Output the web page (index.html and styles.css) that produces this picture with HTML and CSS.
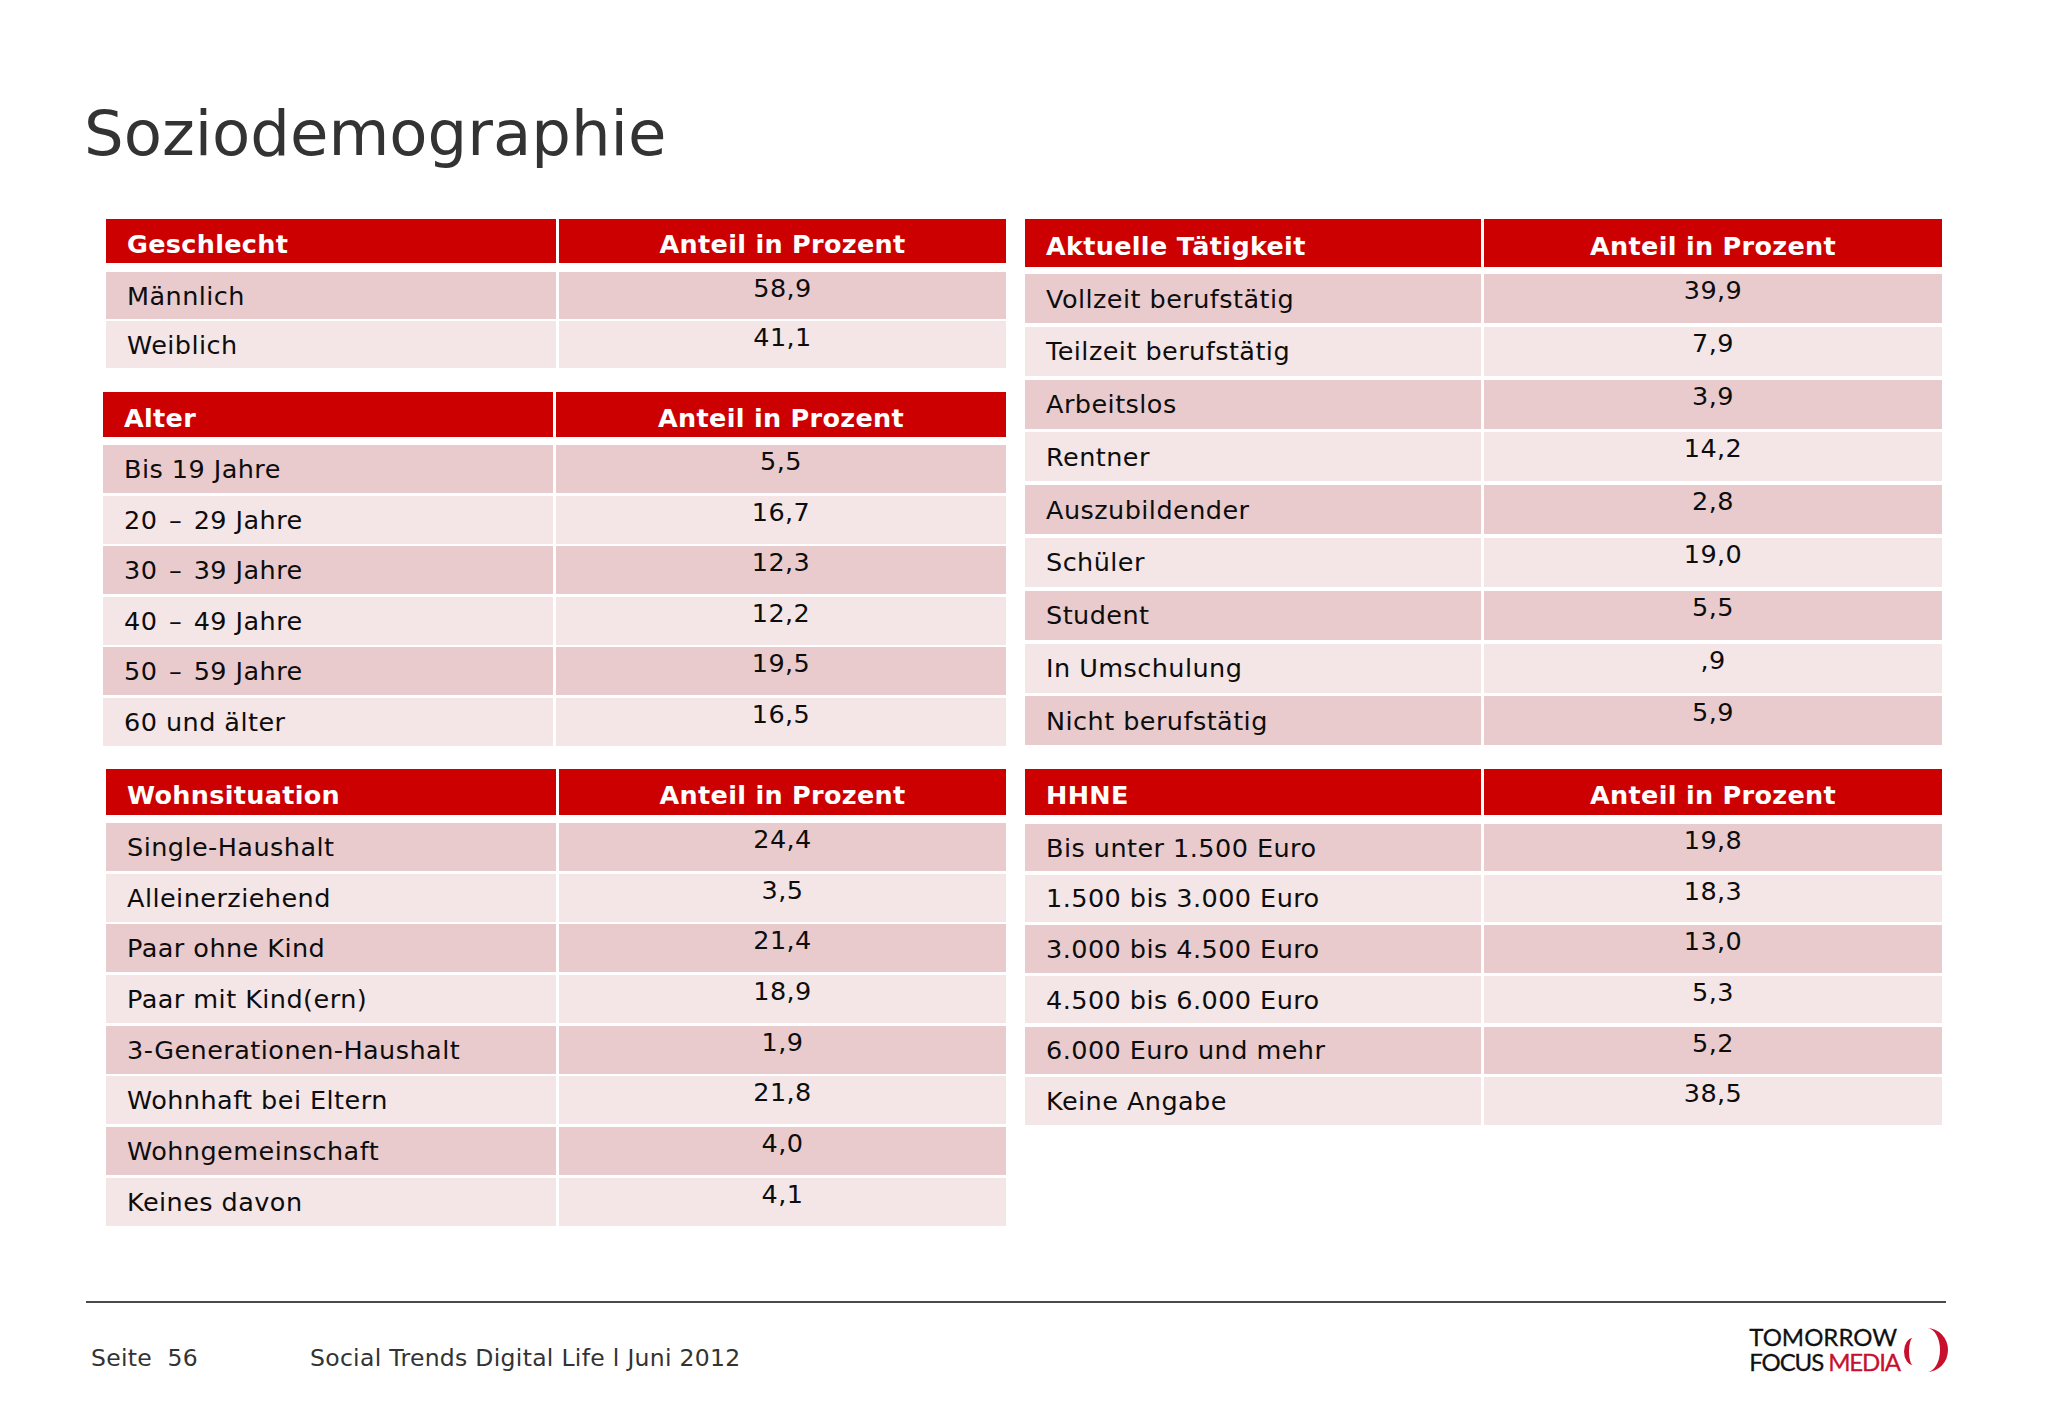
FILE: index.html
```html
<!DOCTYPE html>
<html lang="de">
<head>
<meta charset="utf-8">
<title>Soziodemographie</title>
<link rel="stylesheet" href="styles.css">
</head>
<body>
<div class="slide">
  <h1 class="title">Soziodemographie</h1>

  <div class="tables">
    <div class="col col-left">
      <div class="tbl t-gender">
        <div class="tr th"><div class="c1">Geschlecht</div><div class="c2">Anteil in Prozent</div></div>
        <div class="tr"><div class="c1">Männlich</div><div class="c2">58,9</div></div>
        <div class="tr"><div class="c1">Weiblich</div><div class="c2">41,1</div></div>
      </div>

      <div class="tbl t-age">
        <div class="tr th"><div class="c1">Alter</div><div class="c2">Anteil in Prozent</div></div>
        <div class="tr"><div class="c1">Bis 19 Jahre</div><div class="c2">5,5</div></div>
        <div class="tr"><div class="c1">20 <span class="dash">–</span> 29 Jahre</div><div class="c2">16,7</div></div>
        <div class="tr"><div class="c1">30 <span class="dash">–</span> 39 Jahre</div><div class="c2">12,3</div></div>
        <div class="tr"><div class="c1">40 <span class="dash">–</span> 49 Jahre</div><div class="c2">12,2</div></div>
        <div class="tr"><div class="c1">50 <span class="dash">–</span> 59 Jahre</div><div class="c2">19,5</div></div>
        <div class="tr"><div class="c1">60 und älter</div><div class="c2">16,5</div></div>
      </div>

      <div class="tbl t-home">
        <div class="tr th"><div class="c1">Wohnsituation</div><div class="c2">Anteil in Prozent</div></div>
        <div class="tr"><div class="c1">Single-Haushalt</div><div class="c2">24,4</div></div>
        <div class="tr"><div class="c1">Alleinerziehend</div><div class="c2">3,5</div></div>
        <div class="tr"><div class="c1">Paar ohne Kind</div><div class="c2">21,4</div></div>
        <div class="tr"><div class="c1">Paar mit Kind(ern)</div><div class="c2">18,9</div></div>
        <div class="tr"><div class="c1">3-Generationen-Haushalt</div><div class="c2">1,9</div></div>
        <div class="tr"><div class="c1">Wohnhaft bei Eltern</div><div class="c2">21,8</div></div>
        <div class="tr"><div class="c1">Wohngemeinschaft</div><div class="c2">4,0</div></div>
        <div class="tr"><div class="c1">Keines davon</div><div class="c2">4,1</div></div>
      </div>
    </div>

    <div class="col col-right">
      <div class="tbl t-job">
        <div class="tr th"><div class="c1">Aktuelle Tätigkeit</div><div class="c2">Anteil in Prozent</div></div>
        <div class="tr"><div class="c1">Vollzeit berufstätig</div><div class="c2">39,9</div></div>
        <div class="tr"><div class="c1">Teilzeit berufstätig</div><div class="c2">7,9</div></div>
        <div class="tr"><div class="c1">Arbeitslos</div><div class="c2">3,9</div></div>
        <div class="tr"><div class="c1">Rentner</div><div class="c2">14,2</div></div>
        <div class="tr"><div class="c1">Auszubildender</div><div class="c2">2,8</div></div>
        <div class="tr"><div class="c1">Schüler</div><div class="c2">19,0</div></div>
        <div class="tr"><div class="c1">Student</div><div class="c2">5,5</div></div>
        <div class="tr"><div class="c1">In Umschulung</div><div class="c2">,9</div></div>
        <div class="tr"><div class="c1">Nicht berufstätig</div><div class="c2">5,9</div></div>
      </div>

      <div class="tbl t-income">
        <div class="tr th"><div class="c1">HHNE</div><div class="c2">Anteil in Prozent</div></div>
        <div class="tr"><div class="c1">Bis unter 1.500 Euro</div><div class="c2">19,8</div></div>
        <div class="tr"><div class="c1">1.500 bis 3.000 Euro</div><div class="c2">18,3</div></div>
        <div class="tr"><div class="c1">3.000 bis 4.500 Euro</div><div class="c2">13,0</div></div>
        <div class="tr"><div class="c1">4.500 bis 6.000 Euro</div><div class="c2">5,3</div></div>
        <div class="tr"><div class="c1">6.000 Euro und mehr</div><div class="c2">5,2</div></div>
        <div class="tr"><div class="c1">Keine Angabe</div><div class="c2">38,5</div></div>
      </div>
    </div>
  </div>

  <div class="footer">
    <div class="rule"></div>
    <div class="foot-row">
      <span class="page">Seite&nbsp; 56</span>
      <span class="doc">Social Trends Digital Life l Juni 2012</span>
      <div class="logo">
        <div class="logo-text">
          <div class="logo-l1">TOMORROW</div>
          <div class="logo-l2">FOCUS <span class="red">MEDIA</span></div>
        </div>
        <svg class="logo-mark" width="50" height="46" viewBox="0 0 50 46" aria-hidden="true">
          <path d="M13 11 A9 13.5 0 0 0 13 38 A4 13.5 0 0 1 13 11 Z" fill="#c8102e"/>
          <path d="M27 1 A21 22 0 0 1 27 45 A13 22 0 0 0 27 1 Z" fill="#c8102e"/>
        </svg>
      </div>
    </div>
  </div>
</div>
</body>
</html>
```

FILE: styles.css
```css
html, body {
  margin: 0;
  padding: 0;
  background: #ffffff;
}

body {
  width: 2048px;
  height: 1418px;
  overflow: hidden;
  font-family: "DejaVu Sans", Verdana, sans-serif;
  color: #0d0d0d;
}

.slide {
  box-sizing: border-box;
  width: 2048px;
  height: 1418px;
  padding: 97px 98px 0 84px;
  display: flex;
  flex-direction: column;
}

.title {
  margin: 0;
  font-size: 62.5px;
  line-height: 73px;
  font-weight: normal;
  color: #333333;
}

.tables {
  display: flex;
  align-items: flex-start;
  gap: 19px;
  margin: 49px 0 0 19px;
}

.col {
  display: flex;
  flex-direction: column;
}

.col-left { width: 903px; }
.col-right { width: 917px; }

/* tables */
.tbl {
  --c1: 450px;
  --c2: 447px;
  --hh: 46px;
  --hg: 8px;
  --rh: 48px;
  --rg: 2.7px;
  display: flex;
  flex-direction: column;
}

.t-gender { margin-left: 3px; --hh: 44px; --hg: 9px; --rh: 47px; --rg: 2px; }
.t-age { margin-top: 24px; --c2: 450px; --hh: 45px; --hg: 8px; --rh: 48px; --rg: 2.6px; }
.t-home { margin-top: 23px; margin-left: 3px; --hh: 46px; --hg: 8px; --rh: 48px; --rg: 2.7px; }
.t-job { --c1: 456px; --c2: 458px; --hh: 48px; --hg: 7px; --rh: 49px; --rg: 3.8px; }
.t-income { margin-top: 23.5px; --c1: 456px; --c2: 458px; --hh: 46px; --hg: 9px; --rh: 47.5px; --rg: 3.2px; }

.tr {
  display: grid;
  grid-template-columns: var(--c1) var(--c2);
  column-gap: 3px;
  height: var(--rh);
  margin-top: var(--rg);
  font-size: 25.5px;
  line-height: 30px;
  letter-spacing: 0.45px;
}

.tr.th {
  height: var(--hh);
  margin-top: 0;
  letter-spacing: 0.3px;
}

.th + .tr { margin-top: var(--hg); }

.tr .c1 {
  display: flex;
  align-items: center;
  padding-left: 21px;
  white-space: pre;
}

.dash {
  margin: 0 3px;
}

.tr .c2 {
  display: flex;
  justify-content: center;
  align-items: flex-start;
  padding-top: 1px;
}

.tr:nth-child(even) .c1,
.tr:nth-child(even) .c2 { background: #e9cbcd; }

.tr:nth-child(odd) .c1,
.tr:nth-child(odd) .c2 { background: #f4e5e7; }

.tr.th .c1,
.tr.th .c2 {
  background: #cc0000;
  color: #ffffff;
  font-weight: bold;
  align-items: center;
  padding-top: 6px;
  box-sizing: border-box;
}

/* footer */
.footer {
  margin-top: 75px;
  display: flex;
  flex-direction: column;
}

.rule {
  height: 2px;
  background: #4a4a4a;
  margin: 0 4px 0 2px;
}

.foot-row {
  display: flex;
  align-items: flex-start;
  margin-top: 21px;
}

.page,
.doc {
  margin-top: 20px;
  font-size: 23.5px;
  line-height: 28px;
  letter-spacing: 0.3px;
  color: #333333;
  white-space: nowrap;
}

.page {
  margin-left: 7px;
  width: 219px;
}

.logo {
  margin-left: auto;
  display: flex;
  align-items: flex-start;
}

.logo-text {
  font-family: Lato, "Open Sans", sans-serif;
  font-size: 24px;
  line-height: 25px;
  color: #111111;
  white-space: nowrap;
  -webkit-text-stroke: 0.3px currentColor;
}

.logo-l1 { letter-spacing: 0; }
.logo-l2 { letter-spacing: -1.1px; }

.logo-text .red { color: #c8102e; }

.logo-mark {
  display: block;
  margin-top: 3px;
}
```
